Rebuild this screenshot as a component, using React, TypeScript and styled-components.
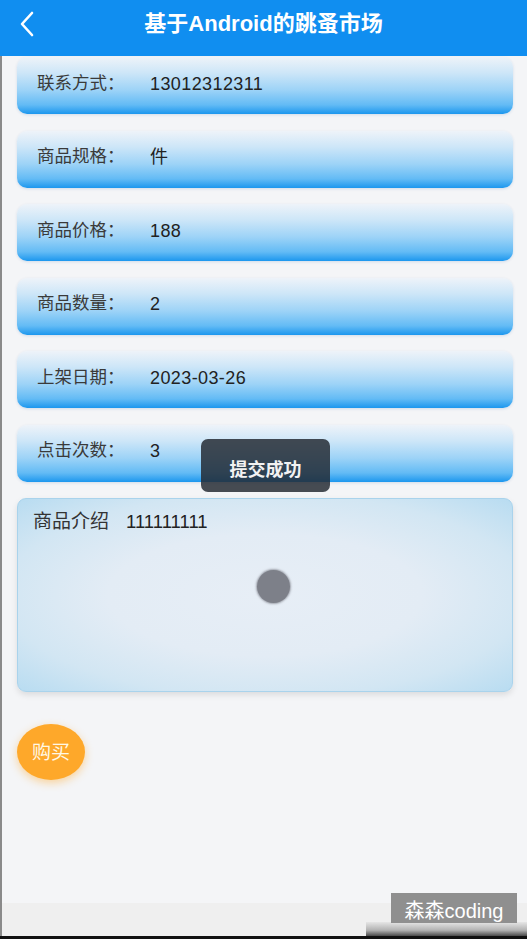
import styled, { createGlobalStyle } from "styled-components";

const GlobalStyle = createGlobalStyle`
  html, body {
    margin: 0;
    padding: 0;
    background: #f4f5f7;
  }
  * {
    box-sizing: border-box;
  }
`;

const Screen = styled.div`
  position: relative;
  width: 527px;
  height: 939px;
  overflow: hidden;
  display: flex;
  flex-direction: column;
  background: #f4f5f7;
  font-family: "Liberation Sans", "Noto Sans CJK SC", sans-serif;
  color: #333;
`;

const Header = styled.header`
  position: relative;
  height: 56px;
  flex-shrink: 0;
  display: flex;
  align-items: center;
  justify-content: center;
  background: #108ef0;
`;

const BackButton = styled.button`
  position: absolute;
  left: 14px;
  top: 9px;
  width: 26px;
  height: 30px;
  padding: 0;
  border: none;
  background: transparent;
  display: flex;
  align-items: center;
  justify-content: center;
`;

const Title = styled.h1`
  margin: 0 0 8px;
  font-size: 22px;
  line-height: 1;
  font-weight: bold;
  color: #fff;
`;

const Content = styled.main`
  flex: 1;
  display: flex;
  flex-direction: column;
  gap: 16.5px;
  padding: 1px 14px 0 15px;
  border-left: 2px solid #8a8a8a;
`;

const InfoRow = styled.div`
  height: 57px;
  display: flex;
  align-items: center;
  padding: 0 0 4px 20px;
  line-height: 1;
  border-radius: 10px;
  background: linear-gradient(
    180deg,
    #eef3f9 0%,
    #cde6f8 28%,
    #9dd3f7 58%,
    #63bbf5 84%,
    #1c97ee 100%
  );
  box-shadow: 0 1px 3px rgba(0, 80, 160, 0.15);
`;

const Label = styled.span`
  width: 113px;
  font-size: 17.5px;
  color: #3a3a3a;
`;

const Value = styled.span`
  font-size: 18px;
  letter-spacing: 0.4px;
  color: #222;
`;

const IntroBox = styled.div`
  position: relative;
  height: 194px;
  padding: 12px 15px;
  border: 1px solid #a9d3ec;
  border-radius: 9px;
  background: radial-gradient(
    ellipse at 50% 50%,
    #e7eef6 0%,
    #e3ecf5 45%,
    #d2e6f3 75%,
    #b8dcf1 100%
  );
  box-shadow: 0 3px 6px rgba(0, 0, 0, 0.1);
  font-size: 19px;
  line-height: 1.2;
  color: #333;
`;

const IntroValue = styled.span`
  margin-left: 17px;
  font-size: 18.5px;
  color: #222;
`;

const TouchDot = styled.span`
  position: absolute;
  left: 239px;
  top: 71px;
  width: 33px;
  height: 33px;
  border-radius: 50%;
  background: #7d8089;
  box-shadow: 0 0 2px 1px rgba(90, 90, 100, 0.5);
`;

const BuyButton = styled.button`
  align-self: flex-start;
  margin-top: 15px;
  width: 68px;
  height: 56px;
  padding: 0 0 2px;
  border: none;
  border-radius: 50%;
  background: #fea82a;
  box-shadow: 0 3px 8px rgba(254, 168, 42, 0.45);
  color: #fff8e6;
  font-family: inherit;
  font-size: 19px;
`;

const BottomBar = styled.div`
  height: 33px;
  flex-shrink: 0;
  background: #efefef;
  border-left: 2px solid #8a8a8a;
`;

const BlackEdge = styled.div`
  height: 3px;
  flex-shrink: 0;
  background: #111;
`;

const Toast = styled.div`
  position: absolute;
  left: 201px;
  top: 439px;
  width: 129px;
  height: 53px;
  display: flex;
  align-items: center;
  justify-content: center;
  padding-top: 4px;
  border-radius: 7px;
  background: rgba(36, 42, 50, 0.84);
  color: #f2f2f2;
  font-size: 18px;
  font-weight: bold;
`;

const Watermark = styled.div`
  position: absolute;
  left: 391px;
  top: 893px;
  width: 126px;
  height: 30px;
  display: flex;
  align-items: center;
  justify-content: center;
  padding-top: 3px;
  background: #8f8f8f;
  color: #fff;
  font-size: 20px;
`;

const ScreenShade = styled.div`
  position: absolute;
  left: 366px;
  bottom: 3px;
  width: 161px;
  height: 14px;
  background: linear-gradient(180deg, #e6e6e6 0%, #b0b0b0 60%, #4a4a4a 100%);
`;

const rows = [
  { label: "联系方式：", value: "13012312311" },
  { label: "商品规格：", value: "件" },
  { label: "商品价格：", value: "188" },
  { label: "商品数量：", value: "2" },
  { label: "上架日期：", value: "2023-03-26" },
  { label: "点击次数：", value: "3" },
];

export default function App() {
  return (
    <>
      <GlobalStyle />
      <Screen>
        <Header>
          <BackButton aria-label="返回">
            <svg width="20" height="28" viewBox="0 0 20 28">
              <polyline
                points="15,3 5,14 15,25"
                fill="none"
                stroke="#fff"
                strokeWidth="2.6"
                strokeLinecap="round"
                strokeLinejoin="round"
              />
            </svg>
          </BackButton>
          <Title>基于Android的跳蚤市场</Title>
        </Header>

        <Content>
          {rows.map((row) => (
            <InfoRow key={row.label}>
              <Label>{row.label}</Label>
              <Value>{row.value}</Value>
            </InfoRow>
          ))}

          <IntroBox>
            商品介绍
            <IntroValue>111111111</IntroValue>
            <TouchDot />
          </IntroBox>

          <BuyButton>购买</BuyButton>
        </Content>

        <BottomBar />
        <BlackEdge />

        <Toast>提交成功</Toast>
        <ScreenShade />
        <Watermark>森森coding</Watermark>
      </Screen>
    </>
  );
}
